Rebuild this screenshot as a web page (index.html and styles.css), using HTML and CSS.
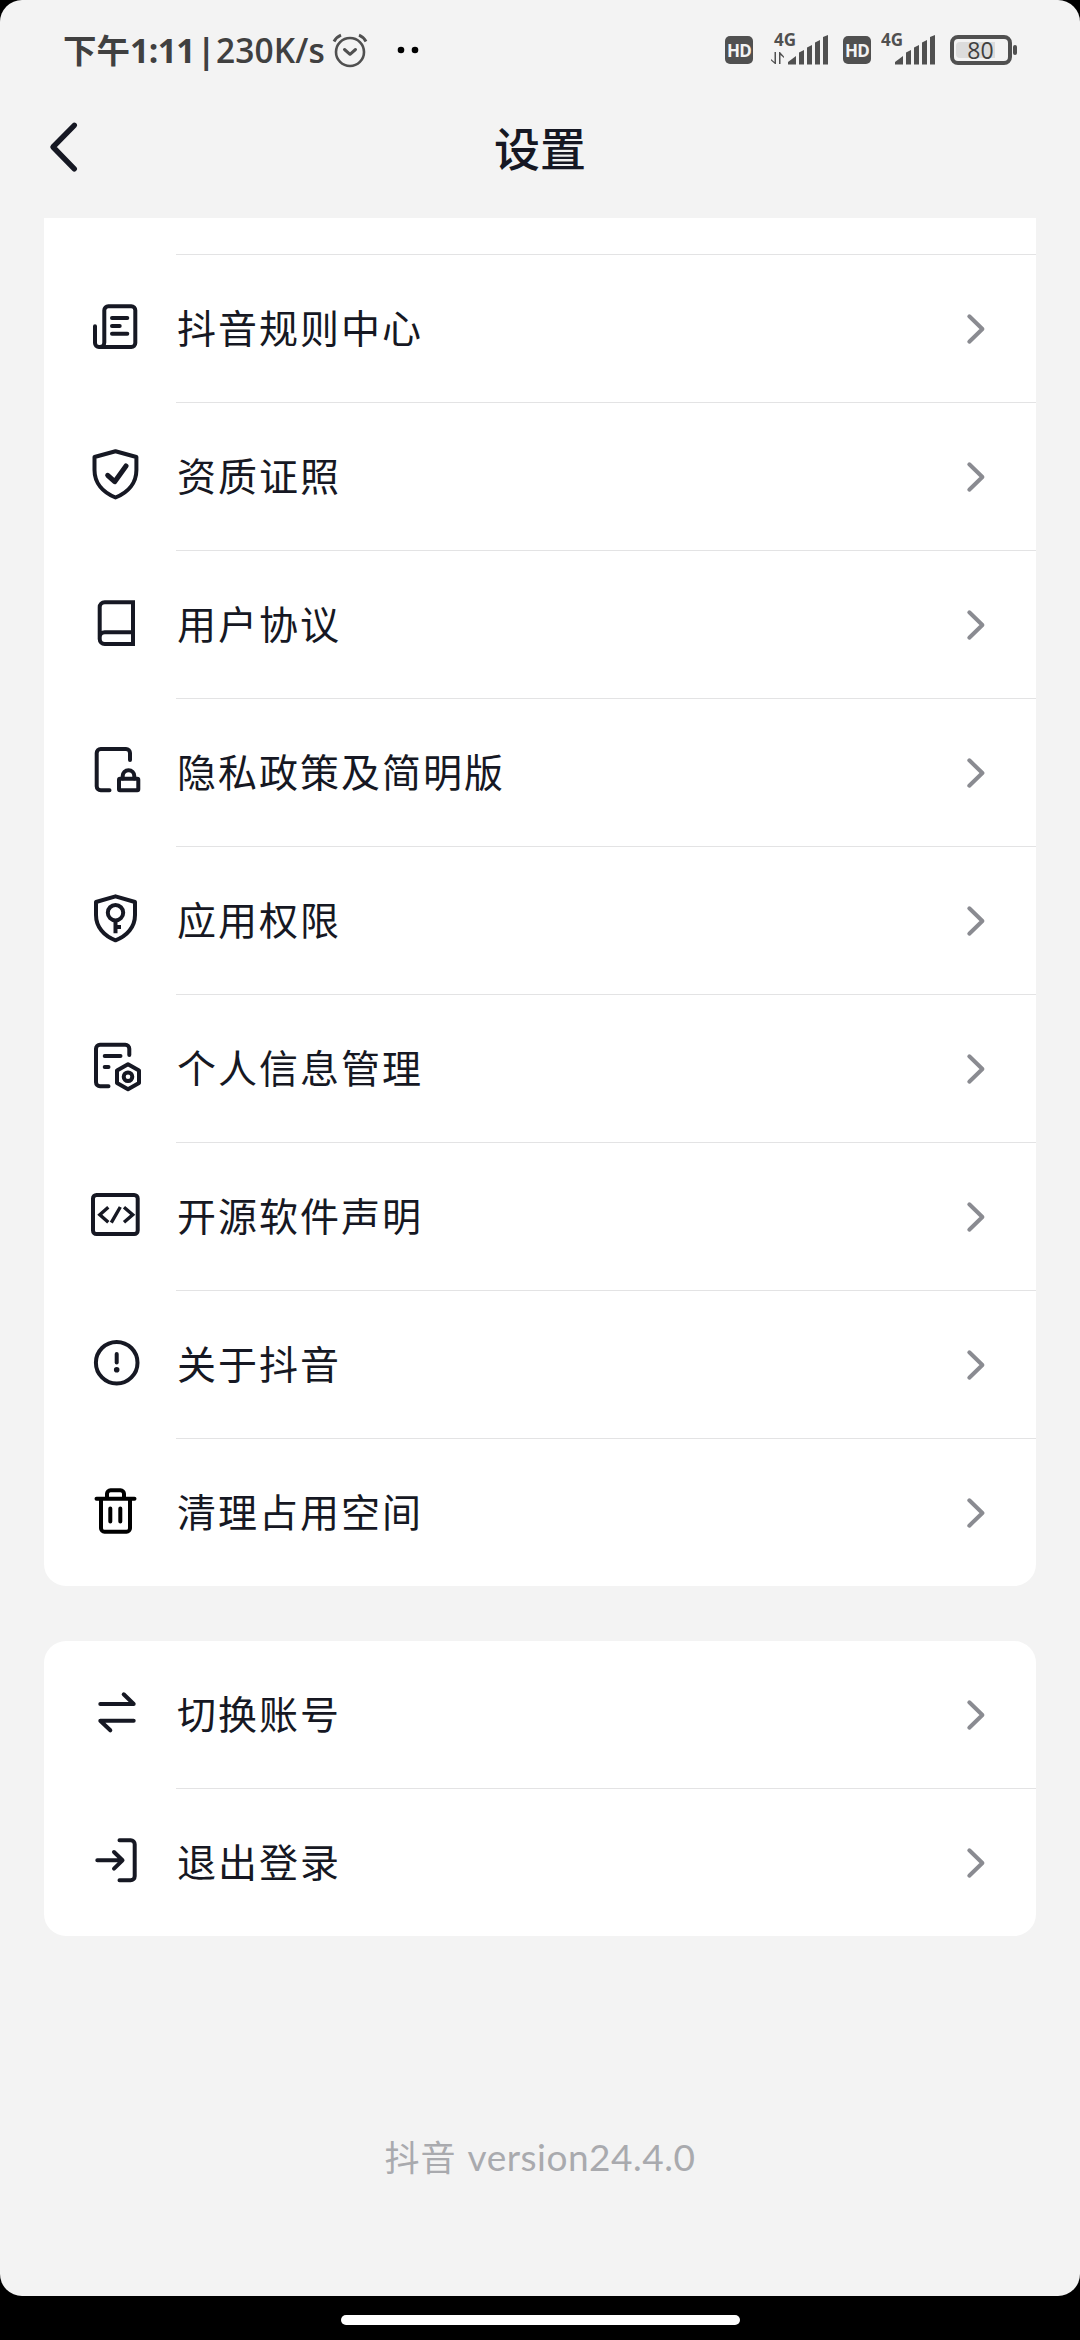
FILE: index.html
```html
<!DOCTYPE html>
<html lang="zh-CN">
<head>
<meta charset="utf-8">
<title>设置</title>
<link rel="stylesheet" href="styles.css">
</head>
<body>
<svg class="defs" width="0" height="0" aria-hidden="true">
  <symbol id="chevron" viewBox="0 0 20 32"><path d="M3.3 3.3L16.4 16L3.3 28.7"/></symbol>
  <symbol id="bars" viewBox="0 0 41 30"><path d="M0 29.5V27L8 21V29.5ZM11 29.5V17.5L16 15V29.5ZM19 29.5V12.5L24 10V29.5ZM27 29.5V7.5L32 5V29.5ZM35 29.5V2L40 0V29.5Z"/></symbol>
</svg>
<div class="screen">
  <header class="status">
    <span class="clock"><span class="cjk">下午</span><span class="time">1:11</span><span class="sep">|</span><span class="speed">230K/s</span></span>
    <svg class="alarm" width="36" height="36" viewBox="0 0 36 36"><circle cx="18" cy="20" r="14"/><path class="hand" d="M12.5 17.5L18 22.3L23.5 17.5"/><path class="ear" d="M2 9.5Q4.5 5 9 3.2M34 9.5Q31.500 5 27 3.200"/></svg>
    <svg class="dots" width="22" height="8" viewBox="0 0 22 8"><circle cx="4" cy="4" r="3.3"/><circle cx="18" cy="4" r="3.3"/></svg>
    <span class="grow"></span>
    <span class="hd">HD</span>
    <svg class="signal first" width="60" height="48" viewBox="0 -6 60 48"><text x="4" y="14">4G</text><path d="M1 27L4.500 30V20H6V32H5L1 28.500ZM9 32V20H10L14 24.500V26L10.500 23V32Z"/><use href="#bars" x="18" y="3" width="41" height="30"/></svg>
    <span class="hd">HD</span>
    <svg class="signal second" width="56" height="48" viewBox="0 -6 56 48"><text x="0" y="14">4G</text><use href="#bars" x="14" y="3" width="41" height="30"/></svg>
    <svg class="battery" width="70" height="32" viewBox="0 0 70 32"><rect class="shell" x="3" y="3" width="58" height="26" rx="6"/><path class="level" d="M11 8H46V24H11Q7 24 7 20V12Q7 8 11 8Z"/><rect class="nub" x="64" y="11" width="4" height="10" rx="2"/><text x="31.500" y="24.500">80</text></svg>
  </header>
  <nav class="titlebar">
    <svg class="back" width="34" height="54" viewBox="0 0 34 54"><path d="M27.300 5.300L6 27L27.300 48.800"/></svg>
    <h1>设置</h1>
  </nav>
  <main>
    <section class="card clipped">
      <div class="row"><svg class="icon" viewBox="0 0 60 61"><path d="M9 28.300V45a4 4 0 0 0 4 4H45.300a4 4 0 0 0 4-4V12.300a4 4 0 0 0-4-4H22.300a4 4 0 0 0-4 4V44.500a4.500 4.500 0 0 1-4.500 4.500M26 20H41.300M26 28H33.700M26 35.700H41.300"/></svg><span class="label">抖音规则中心</span><svg class="go"><use href="#chevron"/></svg></div>
      <div class="row"><svg class="icon" viewBox="0 0 60 61"><path d="M29.500 5.300L50.400 11V24C50.400 37 42 46.500 29.500 51.500C17 46.500 8.500 37 8.500 24V11Z"/><path class="bold" d="M21.700 29.300L28.700 35.700L40 20"/></svg><span class="label">资质证照</span><svg class="go"><use href="#chevron"/></svg></div>
      <div class="row"><svg class="icon" viewBox="0 0 60 61"><path class="sharp" d="M47 8.300H18.700a5 5 0 0 0-5 5V45a5 5 0 0 0 5 5H47ZM47 38.300H18.700a5 5 0 0 0-5 5"/></svg><span class="label">用户协议</span><svg class="go"><use href="#chevron"/></svg></div>
      <div class="row"><svg class="icon" viewBox="0 0 60 61"><path d="M44 18V11a4 4 0 0 0-4-4H14.700a4 4 0 0 0-4 4V44.300a4 4 0 0 0 4 4H23.500"/><rect x="33" y="36.700" width="19.300" height="11.600" rx="1"/><path d="M36.700 36.500V34a5.800 5.800 0 0 1 11.600 0V36.500"/></svg><span class="label">隐私政策及简明版</span><svg class="go"><use href="#chevron"/></svg></div>
      <div class="row"><svg class="icon" viewBox="0 0 60 61"><path d="M29.500 6.300L49 12V25C49 37 41 46 29.500 50.300C18 46 10 37 10 25V12Z"/><circle cx="29.500" cy="22.700" r="7.700"/><path class="sharp" d="M29.500 30.500V43.300M29.500 37H35"/></svg><span class="label">应用权限</span><svg class="go"><use href="#chevron"/></svg></div>
      <div class="row"><svg class="icon" viewBox="0 0 60 61"><path d="M43.300 17V10.700a4 4 0 0 0-4-4H14a4 4 0 0 0-4 4V44.300a4 4 0 0 0 4 4H22.500M18.700 18H34.500M18.700 29H22.500M42 26.300L53 32.500V45L42 51.200L31 45V32.500Z"/><circle cx="42" cy="38.700" r="4.300"/></svg><span class="label">个人信息管理</span><svg class="go"><use href="#chevron"/></svg></div>
      <div class="row"><svg class="icon" viewBox="0 0 60 61"><rect x="7" y="9" width="44.700" height="39" rx="3.500"/><path class="thin" d="M22.300 21.300L13.800 28.700L22.300 36.300M34.300 21L25.300 36.700M38 21.300L46.700 28.700L38 36.300"/></svg><span class="label">开源软件声明</span><svg class="go"><use href="#chevron"/></svg></div>
      <div class="row"><svg class="icon" viewBox="0 0 60 61"><circle cx="30.700" cy="28.700" r="20.800"/><path d="M30.700 20V28.500"/><circle class="dot" cx="30.700" cy="35.700" r="2.800"/></svg><span class="label">关于抖音</span><svg class="go"><use href="#chevron"/></svg></div>
      <div class="row"><svg class="icon black" viewBox="0 0 60 61"><path d="M10.500 16.700H48.500M21 16V11.800a3.500 3.500 0 0 1 3.500-3.500H34.500a3.500 3.500 0 0 1 3.500 3.500V16M15 17V46.200a3.500 3.500 0 0 0 3.500 3.500H40.500a3.500 3.500 0 0 0 3.500-3.500V17M24.300 26.500V39.500M34.300 26.500V39.500"/></svg><span class="label">清理占用空间</span><svg class="go"><use href="#chevron"/></svg></div>
    </section>
    <section class="card">
      <div class="row"><svg class="icon" viewBox="0 0 60 61"><path d="M14.300 20H47.700L37.700 10.300M47.700 36.700H14.300L24.300 46.300"/></svg><span class="label">切换账号</span><svg class="go"><use href="#chevron"/></svg></div>
      <div class="row"><svg class="icon" viewBox="0 0 60 61"><path d="M11.300 28.300H36.500M28 20L36.500 28.300L28 36.700M33.500 8.300H44.700a4 4 0 0 1 4 4V44.300a4 4 0 0 1-4 4H33.500"/></svg><span class="label">退出登录</span><svg class="go"><use href="#chevron"/></svg></div>
    </section>
  </main>
  <footer class="version"><span>抖音</span><span class="num">version24.4.0</span></footer>
</div>
<div class="homebar"><span></span></div>
</body>
</html>
```

FILE: styles.css
```css
* { box-sizing: border-box; }
body {
  margin: 0;
  width: 1080px;
  height: 2340px;
  overflow: hidden;
  background: #000;
  color: #161823;
  font-family: "Noto Sans CJK SC", sans-serif;
}
.defs { display: block; }
svg { flex: none; }
.screen {
  display: flex;
  flex-direction: column;
  height: 2296px;
  background: #f3f3f3;
  border-radius: 22px;
}
.status {
  display: flex;
  align-items: center;
  height: 100px;
  padding: 0 61px 0 63px;
  color: #404040;
}
.clock {
  display: flex;
  align-items: center;
  width: 269px;
  line-height: 48px;
  white-space: nowrap;
  font-family: "Open Sans", "Noto Sans CJK SC", sans-serif;
  font-size: 33.5px;
  font-weight: 600;
}
.cjk { width: 67px; padding-bottom: 2px; font: 700 33.5px/48px "Noto Sans CJK SC", sans-serif; }
.time { width: 67px; font-weight: 700; letter-spacing: -0.5px; }
.sep { width: 19px; font-weight: 700; }
.speed { letter-spacing: 0.1px; }
.alarm { fill: none; stroke: #505050; stroke-width: 2.6; stroke-linecap: round; stroke-linejoin: round; }
.alarm .hand { stroke-width: 3; }
.alarm .ear { stroke-width: 3; stroke-linecap: butt; }
.dots { margin-left: 29px; fill: #000; }
.grow { flex: 1; }
.hd {
  width: 28px;
  height: 28px;
  border-radius: 5px;
  background: #505050;
  color: #f3f3f3;
  font: 700 17px/29px "Open Sans", sans-serif;
  letter-spacing: -0.8px;
  text-align: center;
}
.signal { fill: #505050; font: 700 17px "Open Sans", sans-serif; }
.first { margin: 0 13px 0 17px; }
.second { margin: 0 12px 0 10px; }
.battery .shell { fill: none; stroke: #505050; stroke-width: 4; }
.battery .level { fill: #dcdcdc; }
.battery .nub { fill: #505050; }
.battery text { fill: #404040; font: 500 23px "Open Sans", sans-serif; text-anchor: middle; }
.titlebar {
  display: grid;
  grid-template-columns: 90px 1fr 90px;
  align-items: center;
  height: 118px;
  padding: 0 0 24px;
}
.back { margin-left: 47px; fill: none; stroke: #161823; stroke-width: 5.4; stroke-linecap: round; stroke-linejoin: round; }
h1 { margin: 0; padding-bottom: 2px; font-size: 46px; font-weight: 500; line-height: 60px; text-align: center; }
main { display: flex; flex-direction: column; gap: 55px; padding: 0 44px; }
.card { border-radius: 22px; background: #fff; }
.clipped { padding-top: 36px; border-radius: 0 0 22px 22px; }
.row {
  display: flex;
  align-items: center;
  height: 148px;
  padding: 1px 50px 0 42px;
  background: linear-gradient(#e3e3e4, #e3e3e4) 132px 0 / 100% 1px no-repeat;
}
.card:not(.clipped) .row:first-child { height: 147px; padding-top: 0; background: none; }
.icon {
  width: 60px;
  height: 61px;
  fill: none;
  stroke: #161823;
  stroke-width: 4;
  stroke-linecap: round;
  stroke-linejoin: round;
}
.icon .bold { stroke-width: 5; }
.icon .thin { stroke-width: 3.4; stroke-linecap: butt; stroke-linejoin: miter; }
.icon .sharp { stroke-linecap: butt; stroke-linejoin: miter; }
.icon .dot { fill: #161823; stroke: none; }
.black { stroke: #000; }
.label {
  flex: 1;
  margin-left: 31px;
  padding-bottom: 5px;
  font-size: 39px;
  line-height: 56px;
  letter-spacing: 2px;
}
.go { width: 20px; height: 32px; fill: none; stroke: #8a8b91; stroke-width: 4; stroke-linecap: round; stroke-linejoin: round; }
.version {
  display: flex;
  justify-content: center;
  align-items: baseline;
  gap: 11px;
  margin-top: 192px;
  color: #a9aaae;
  font-size: 35px;
  line-height: 56px;
  letter-spacing: 1px;
}
.num { font-family: Lato, sans-serif; font-size: 37px; letter-spacing: 0.5px; }
.homebar { display: flex; justify-content: center; padding-top: 19px; }
.homebar span { width: 399px; height: 10px; border-radius: 5px; background: #fff; }
```
